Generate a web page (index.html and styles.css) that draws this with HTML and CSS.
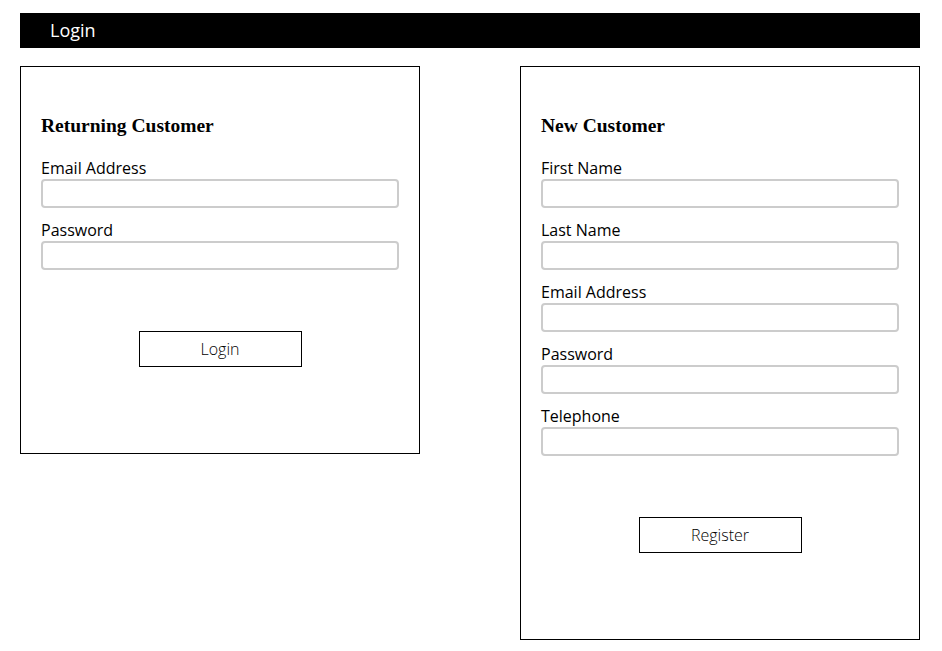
FILE: index.html
```html
<!DOCTYPE html>
<html lang="en">

<head>
    <meta charset="UTF-8">
    <meta name="viewport" content="width=device-width, initial-scale=1.0">
    <title>Login</title>
    <link rel="stylesheet" href="styles.css">
</head>

<body>
    <div class="page">
        <div class="title-bar">Login</div>

        <div class="panels">
            <form class="panel" action="#" method="post">
                <h3>Returning Customer</h3>
                <label class="field">Email Address
                    <input type="email" name="login_email">
                </label>
                <label class="field">Password
                    <input type="password" name="login_password">
                </label>
                <div class="actions">
                    <input type="submit" value="Login">
                </div>
            </form>

            <form class="panel" action="#" method="post">
                <h3>New Customer</h3>
                <label class="field">First Name
                    <input type="text" name="first_name">
                </label>
                <label class="field">Last Name
                    <input type="text" name="last_name">
                </label>
                <label class="field">Email Address
                    <input type="email" name="email">
                </label>
                <label class="field">Password
                    <input type="password" name="password">
                </label>
                <label class="field">Telephone
                    <input type="tel" name="telephone">
                </label>
                <div class="actions">
                    <input type="submit" value="Register">
                </div>
            </form>
        </div>
    </div>
</body>

</html>
```

FILE: styles.css
```css
body {
    margin: 0;
    padding: 0;
    font-family: "Open Sans", Arial, sans-serif;
    color: black;
    background-color: white;
}

.page {
    width: 900px;
    margin: 13px 0 0 20px;
}

.title-bar {
    background-color: black;
    color: white;
    font-size: 18px;
    height: 35px;
    line-height: 35px;
    padding-left: 30px;
}

.panels {
    display: flex;
    justify-content: space-between;
    align-items: flex-start;
    margin-top: 18px;
}

.panel {
    width: 400px;
    box-sizing: border-box;
    border: 1px solid black;
    padding: 20px;
}

.panel h3 {
    font-family: "Liberation Serif", "Times New Roman", serif;
    font-weight: bold;
    font-size: 19.5px;
    line-height: 24px;
    margin: 27px 0 19px 0;
}

.field {
    display: block;
    font-size: 16px;
    line-height: 22px;
    margin-bottom: 11px;
}

.field input {
    display: block;
    width: 100%;
    height: 29px;
    box-sizing: border-box;
    border: 2px solid #cccccc;
    border-radius: 4px;
    margin: 0;
    padding: 0 6px;
    font-family: inherit;
    font-size: 15px;
}

.actions {
    display: flex;
    justify-content: center;
    margin-top: 61px;
    margin-bottom: 66px;
}

.actions input[type="submit"] {
    width: 163px;
    height: 36px;
    border: 1px solid black;
    border-radius: 0;
    background-color: white;
    color: black;
    font-family: "Open Sans", Arial, sans-serif;
    font-size: 16px;
    font-weight: 300;
    cursor: pointer;
}
```
